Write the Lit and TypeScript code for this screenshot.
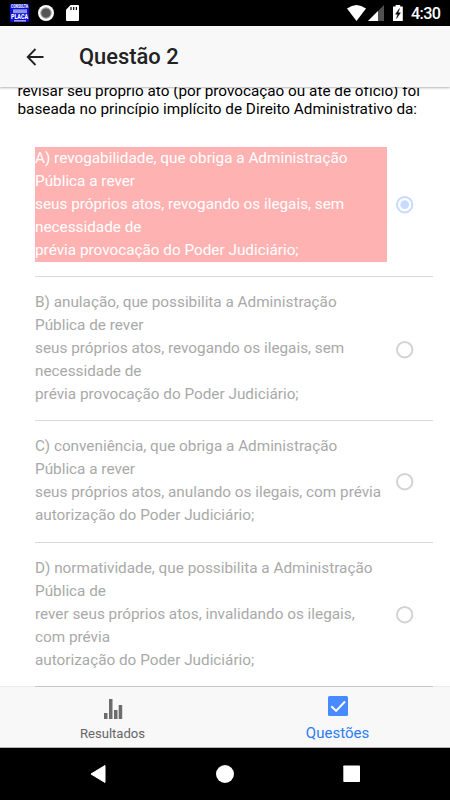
import { LitElement, html, css, svg } from "lit";
import { customElement, property } from "lit/decorators.js";
import { classMap } from "lit/directives/class-map.js";

interface Option {
  lines: string[];
  selected?: boolean;
}

const options: Option[] = [
  {
    selected: true,
    lines: [
      "A) revogabilidade, que obriga a Administração",
      "Pública a rever",
      "seus próprios atos, revogando os ilegais, sem",
      "necessidade de",
      "prévia provocação do Poder Judiciário;",
    ],
  },
  {
    lines: [
      "B) anulação, que possibilita a Administração",
      "Pública de rever",
      "seus próprios atos, revogando os ilegais, sem",
      "necessidade de",
      "prévia provocação do Poder Judiciário;",
    ],
  },
  {
    lines: [
      "C) conveniência, que obriga a Administração",
      "Pública a rever",
      "seus próprios atos, anulando os ilegais, com prévia",
      "autorização do Poder Judiciário;",
    ],
  },
  {
    lines: [
      "D) normatividade, que possibilita a Administração",
      "Pública de",
      "rever seus próprios atos, invalidando os ilegais,",
      "com prévia",
      "autorização do Poder Judiciário;",
    ],
  },
];

@customElement("status-bar")
class StatusBar extends LitElement {
  static styles = css`
    :host { display: flex; height: 26px; background: #000; flex: none; }
    svg { display: block; }
    .plate { font: 900 6.4px Roboto, sans-serif; fill: #fff; }
    .small { font: 900 4.6px Roboto, sans-serif; fill: #eef0ff; }
    .clock { font: 500 16.2px Roboto, sans-serif; fill: #fff; }
  `;
  render() {
    return html`<svg width="450" height="26" viewBox="0 0 450 26">
      <rect x="10" y="4" width="19" height="18" rx="1" fill="#0b10d8" />
      <text class="small" x="11" y="8.300" textLength="17" lengthAdjust="spacingAndGlyphs">CONSULTA</text>
      <rect x="13" y="9.300" width="14" height="3.900" fill="#8f94dc" />
      <text class="plate" x="11" y="19" textLength="17" lengthAdjust="spacingAndGlyphs">PLACA</text>
      <rect x="14" y="20" width="12" height="1.600" fill="#9ca0e6" />
      <circle cx="46" cy="13" r="8" fill="#fff" />
      <circle cx="46" cy="13" r="5.200" fill="#555" stroke="#a5a5a5" stroke-width="1.200" />
      <path d="M70.600 5H78a1 1 0 0 1 1 1v14a1 1 0 0 1-1 1H67a1 1 0 0 1-1-1V9.800z" fill="#fff" />
      <path d="M71 7v3M73.700 7v3M76.400 7v3" stroke="#000" stroke-width="1.200" />
      <path d="M347 8.600Q356.500 1.600 366 8.600L356.500 21z" fill="#fff" />
      <path d="M384 5v16h-16z" fill="#505050" />
      <path d="M378 11v10h-10z" fill="#fff" />
      <path d="M393 6.600h2.600V5h4.600v1.600h2.600V21H393z" fill="#fff" />
      <path d="M399.500 8.500l-4 5.700h2.200l-1.200 4.300 4-5.700h-2.300z" fill="#000" stroke="#000" stroke-width=".4" />
      <text class="clock" x="411" y="19.300" textLength="30">4:30</text>
    </svg>`;
  }
}

@customElement("answer-option")
class AnswerOption extends LitElement {
  @property({ attribute: false }) option!: Option;
  static styles = css`
    :host {
      display: flex;
      align-items: center;
      padding: 14.2px 19px 14.2px 0;
      border-bottom: 1px solid #dadada;
    }
    .text {
      width: 352px;
      font: 400 15.3px/22.1px Roboto, sans-serif;
      color: #a9a9a9;
      white-space: nowrap;
    }
    .text.wrong { background: #ffb2b2; color: #fff; }
    .line { display: block; height: 23px; }
    .radio {
      display: block;
      overflow: visible;
      width: 18px;
      height: 18px;
      margin-left: auto;
      fill: none;
      stroke: #d3d3d3;
      stroke-width: 2;
    }
    .radio.on { stroke: #c8daff; }
    .dot { fill: #c8daff; stroke: none; }
  `;
  render() {
    const on = !!this.option.selected;
    return html`
      <div class=${classMap({ text: true, wrong: on })}>
        ${this.option.lines.map((l) => html`<span class="line">${l}</span>`)}
      </div>
      <svg class=${classMap({ radio: true, on })} viewBox="0 0 18 18">
        <circle cx="8.700" cy="9.700" r="7.700" />
        ${on ? svg`<circle class="dot" cx="8.700" cy="9.700" r="4.400" />` : null}
      </svg>
    `;
  }
}

@customElement("app-root")
class AppRoot extends LitElement {
  static styles = css`
    :host {
      display: flex;
      flex-direction: column;
      width: 450px;
      height: 800px;
      overflow: hidden;
      background: #fff;
      font-family: Roboto, sans-serif;
    }
    svg { display: block; }
    .header {
      display: flex;
      align-items: center;
      flex: none;
      height: 61px;
      box-sizing: border-box;
      padding-left: 26px;
      background: #f8f8f8;
      box-shadow: 0 1px 2px rgba(0, 0, 0, 0.3);
      z-index: 1;
    }
    .title {
      margin: 0 0 0 35px;
      font: 500 21.900px/30px Roboto, sans-serif;
      color: #222;
    }
    .content { flex: 1; min-height: 0; overflow: hidden; }
    .question {
      margin: -5px 0 0 17.500px;
      font-size: 15.300px;
      line-height: 18px;
      color: #000;
      white-space: nowrap;
    }
    .question span { display: block; }
    .list { margin: 14.500px 17px 0 35px; }
    .tabs {
      display: grid;
      grid-template-columns: 1fr 1fr;
      flex: none;
      height: 61px;
      box-sizing: border-box;
      border-bottom: 1px solid #b5b5b5;
      background: #f8f8f8;
      box-shadow: 0 -1px 0 rgba(0, 0, 0, 0.08);
      z-index: 1;
    }
    .tab {
      display: flex;
      flex-direction: column;
      align-items: center;
      font-size: 15px;
      line-height: 18px;
    }
    .tab.results { padding-top: 12px; gap: 6px; color: #666; font-size: 13.100px; }
    .tab.active { padding-top: 9px; gap: 8px; color: #2a7cf5; }
    .nav { flex: none; height: 52px; background: #000; }
  `;
  render() {
    return html`
      <status-bar></status-bar>
      <header class="header">
        <svg width="18" height="18" viewBox="0 0 18 18" fill="none" stroke="#222" stroke-width="1.800">
          <path d="M17.500 9H2M9.500 1L1.700 9l7.800 8" />
        </svg>
        <h1 class="title">Questão 2</h1>
      </header>
      <main class="content">
        <div class="question">
          <span>revisar seu próprio ato (por provocação ou até de ofício) foi</span>
          <span>baseada no princípio implícito de Direito Administrativo da:</span>
        </div>
        <div class="list">
          ${options.map((o) => html`<answer-option .option=${o}></answer-option>`)}
        </div>
      </main>
      <nav class="tabs">
        <div class="tab results">
          <svg width="20" height="20" viewBox="0 0 20 20" fill="#6c6c6c">
            <path d="M1 14h3.500v6H1zM6 0h3.500v20H6zM11 11h3.500v9H11zM15.700 6h3.500v14h-3.500z" />
          </svg>
          <span>Resultados</span>
        </div>
        <div class="tab active">
          <svg width="20" height="20" viewBox="0 0 20 20">
            <rect width="20" height="20" rx="1.500" fill="#488aff" />
            <path d="M3.300 10.200l4.800 4.700L17 5.500" fill="none" stroke="#fff" stroke-width="2" />
          </svg>
          <span>Questões</span>
        </div>
      </nav>
      <footer class="nav">
        <svg width="450" height="52" viewBox="0 0 450 52" fill="#fff">
          <path d="M91 26l14-8.500v17z" stroke="#fff" stroke-width="1" stroke-linejoin="round" />
          <circle cx="225" cy="26" r="9" />
          <rect x="343.300" y="17.500" width="16.700" height="16.500" rx=".8" />
        </svg>
      </footer>
    `;
  }
}
